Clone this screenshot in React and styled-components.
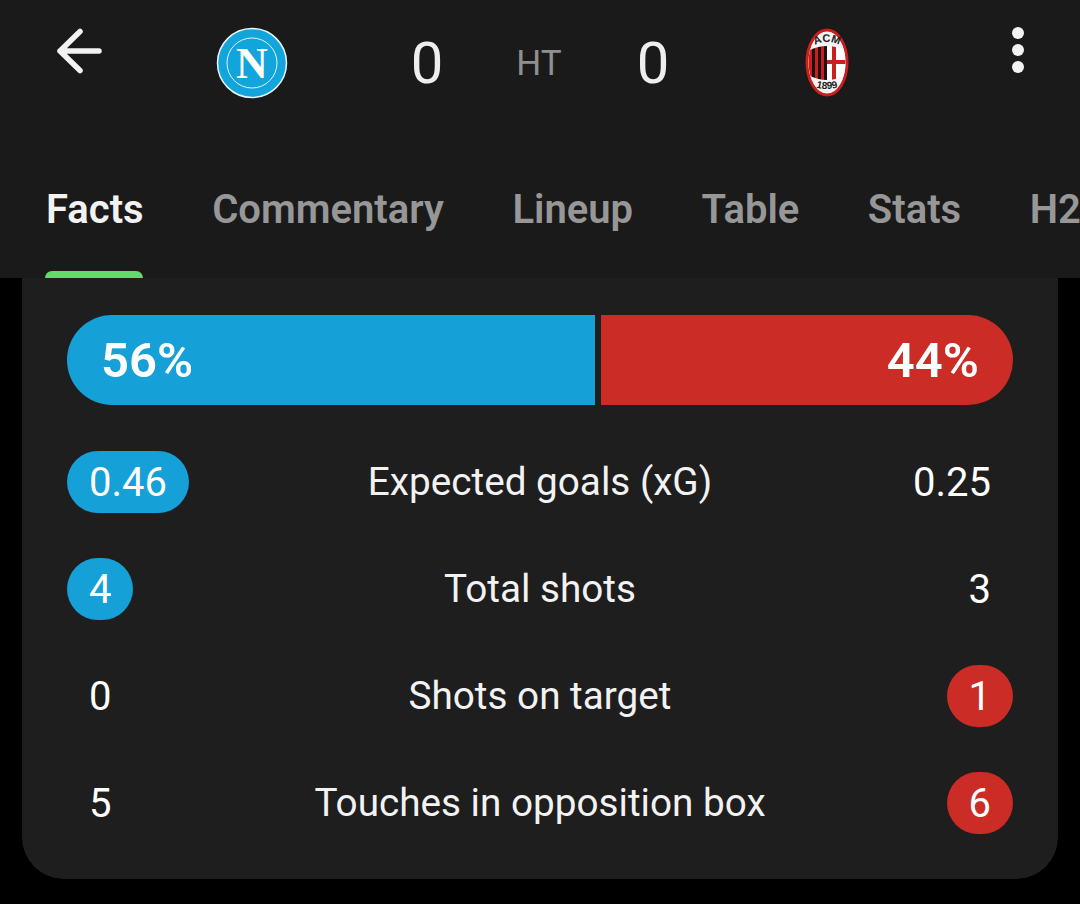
import React from 'react'
import styled, { createGlobalStyle } from 'styled-components'

const GlobalStyle = createGlobalStyle`
  html, body {
    margin: 0;
    padding: 0;
    background: #000;
    font-family: Roboto, "Liberation Sans", sans-serif;
  }
`

const Page = styled.div`
  width: 1080px;
  height: 904px;
  overflow: hidden;
  background: #000;
`

const Header = styled.header`
  height: 278px;
  background: #1a1a1a;
  overflow: hidden;
`

const ScoreRow = styled.div`
  display: grid;
  grid-template-columns: 158px 188px 162px 62px 166px 182px 162px;
  height: 126px;
  align-items: center;
  justify-items: center;
`

const IconSlot = styled.div`
  display: flex;
  margin-bottom: 25px;
`

const DotsSlot = styled(IconSlot)`
  margin-left: 38px;
  margin-bottom: 26px;
  flex-direction: column;
  gap: 5px;
`

const Dot = styled.span`
  width: 12px;
  height: 12px;
  border-radius: 50%;
  background: #f2f2f2;
`

const Score = styled.span`
  font-size: 58px;
  color: #eeeeee;
  font-weight: 400;
`

const Period = styled.span`
  font-size: 35px;
  color: #8f8f8f;
`

const Tabs = styled.nav`
  display: flex;
  gap: 68.5px;
  padding: 59px 0 0 46px;
  white-space: nowrap;
  height: 94px;
`

const Tab = styled.div`
  position: relative;
  font-size: 40px;
  line-height: 50px;
  height: 50px;
  font-weight: 600;
  color: ${({ $active }) => ($active ? '#f2f2f2' : '#979797')};

  ${({ $active }) =>
    $active &&
    `&::after {
      content: '';
      position: absolute;
      left: -1px;
      right: 1px;
      top: 86px;
      height: 7px;
      background: #5fdc6f;
      border-radius: 7px 7px 0 0;
    }`}
`

const Card = styled.section`
  margin: 0 22px;
  height: 601px;
  box-sizing: border-box;
  padding: 37px 45px 0;
  background: #1e1e1e;
  border-radius: 0 0 42px 42px;
`

const PossessionBar = styled.div`
  display: flex;
  gap: 6px;
  height: 90px;
  margin-bottom: 23px;
`

const Segment = styled.div`
  display: flex;
  align-items: center;
  justify-content: ${({ $side }) => ($side === 'left' ? 'flex-start' : 'flex-end')};
  box-sizing: border-box;
  padding: 0 34px;
  width: ${({ $width }) => $width}px;
  background: ${({ $side }) => ($side === 'left' ? '#15a0d8' : '#cc2c26')};
  border-radius: ${({ $side }) => ($side === 'left' ? '45px 0 0 45px' : '0 45px 45px 0')};
  color: #fff;
  font-size: 49px;
  font-weight: 600;
`

const StatRow = styled.div`
  display: grid;
  grid-template-columns: 1fr auto 1fr;
  align-items: center;
  height: 107px;
  font-size: 38.7px;
  color: #f2f2f2;
`

const Label = styled.span`
  text-align: center;
`

const Value = styled.span`
  justify-self: ${({ $side }) => ($side === 'left' ? 'start' : 'end')};
  box-sizing: border-box;
  min-width: 66px;
  height: 62px;
  line-height: 64px;
  padding: 0 22px;
  text-align: center;
  border-radius: 31px;
  font-size: 40px;
  color: #fff;
  background: ${({ $win, $side }) =>
    !$win ? 'transparent' : $side === 'left' ? '#15a0d8' : '#cc2c26'};
`

const BackArrow = () => (
  <svg width="48" height="48" viewBox="0 0 48 48" fill="none" stroke="#f2f2f2" strokeWidth="5.5" strokeLinecap="round" strokeLinejoin="round">
    <path d="M5 24 H44 M25 4.5 L5 24 L25 43.5" />
  </svg>
)

const NapoliBadge = () => (
  <svg width="72" height="72" viewBox="0 0 72 72">
    <circle cx="36" cy="36" r="34.5" fill="#12a5dc" stroke="#eaf7fc" strokeWidth="1.5" />
    <circle cx="36" cy="36" r="25" fill="none" stroke="#dff3fb" strokeWidth="1" />
    <text x="36" y="51" textAnchor="middle" fontFamily="'Liberation Serif', serif" fontWeight="700" fontSize="44" fill="#fff">N</text>
  </svg>
)

const MilanBadge = () => (
  <svg width="46" height="72" viewBox="0 0 46 72">
    <defs>
      <clipPath id="milanInner">
        <ellipse cx="23" cy="35.5" rx="18.5" ry="30.5" />
      </clipPath>
      <path id="milanTop" d="M6 21 Q23 9 40 21" />
      <path id="milanBottom" d="M6 58 Q23 66 40 58" />
    </defs>
    <ellipse cx="23" cy="35.5" rx="22" ry="34.5" fill="#2a1212" />
    <ellipse cx="23" cy="35.5" rx="20" ry="32.5" fill="#f4f4f4" stroke="#c8201f" strokeWidth="3" />
    <g clipPath="url(#milanInner)">
      <path d="M4 24 Q23 14 42 24 V48 Q23 58 4 48 Z" fill="#fff" />
      <path d="M4 20 H8 V56 H4 Z M11 18 H14 V56 H11 Z M17 16 H20 V56 H17 Z" fill="#c8201f" />
      <path d="M8 20 H11 V56 H8 Z M14 18 H17 V56 H14 Z M20 16 H23 V56 H20 Z" fill="#1a1212" />
      <path d="M28 16 H32 V56 H28 Z M23 33 H42 V37 H23 Z" fill="#c8201f" />
      <path d="M4 24 Q23 14 42 24 V0 H4 Z M4 48 Q23 58 42 48 V70 H4 Z" fill="#f4f4f4" />
    </g>
    <text fontFamily="'Liberation Sans', sans-serif" fontWeight="700" fontSize="11" fill="#222">
      <textPath href="#milanTop" startOffset="50%" textAnchor="middle">ACM</textPath>
    </text>
    <text fontFamily="'Liberation Sans', sans-serif" fontWeight="700" fontSize="10" fill="#222">
      <textPath href="#milanBottom" startOffset="50%" textAnchor="middle">1899</textPath>
    </text>
  </svg>
)

const tabs = ['Facts', 'Commentary', 'Lineup', 'Table', 'Stats', 'H2H']

const stats = [
  { home: '0.46', label: 'Expected goals (xG)', away: '0.25', win: 'home' },
  { home: '4', label: 'Total shots', away: '3', win: 'home' },
  { home: '0', label: 'Shots on target', away: '1', win: 'away' },
  { home: '5', label: 'Touches in opposition box', away: '6', win: 'away' },
]

export default function App() {
  return (
    <Page>
      <GlobalStyle />
      <Header>
        <ScoreRow>
          <IconSlot><BackArrow /></IconSlot>
          <NapoliBadge />
          <Score>0</Score>
          <Period>HT</Period>
          <Score>0</Score>
          <MilanBadge />
          <DotsSlot><Dot /><Dot /><Dot /></DotsSlot>
        </ScoreRow>
        <Tabs>
          {tabs.map((t, i) => (
            <Tab key={t} $active={i === 0}>{t}</Tab>
          ))}
        </Tabs>
      </Header>
      <Card>
        <PossessionBar>
          <Segment $side="left" $width={528}>56%</Segment>
          <Segment $side="right" $width={412}>44%</Segment>
        </PossessionBar>
        {stats.map((s) => (
          <StatRow key={s.label}>
            <Value $side="left" $win={s.win === 'home'}>{s.home}</Value>
            <Label>{s.label}</Label>
            <Value $side="right" $win={s.win === 'away'}>{s.away}</Value>
          </StatRow>
        ))}
      </Card>
    </Page>
  )
}
